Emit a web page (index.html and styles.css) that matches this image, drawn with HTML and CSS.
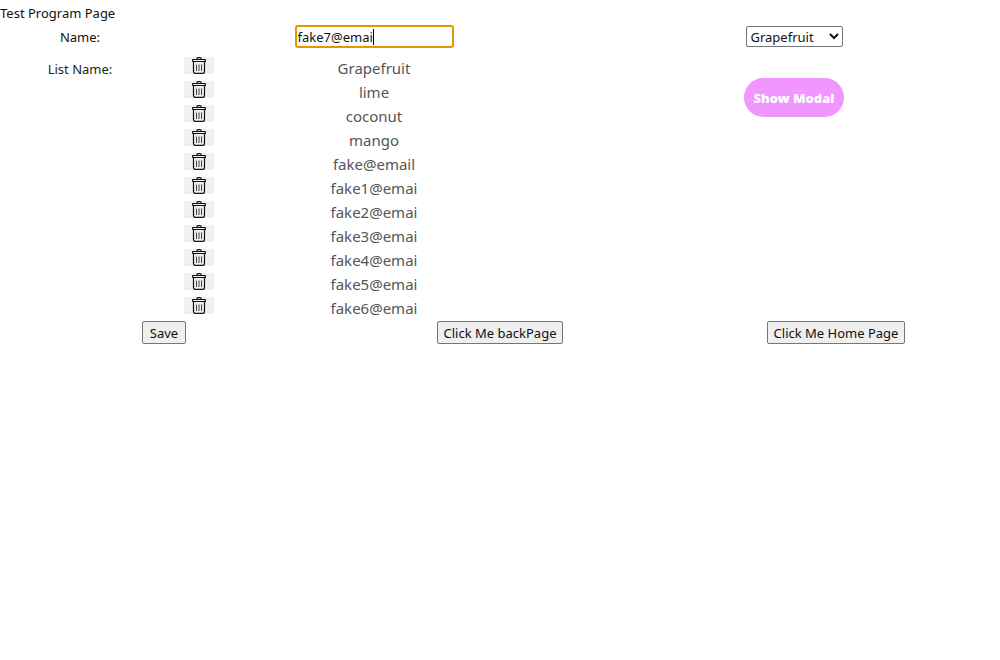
FILE: index.html
```html
<!DOCTYPE html>
<html lang="en">
<head>
<meta charset="utf-8">
<title>Test Program Page</title>
<link rel="stylesheet" href="styles.css">
</head>
<body>
<header class="title">Test Program Page</header>
<main>
<form class="columns entry">
<label for="name">Name:</label>
<div class="field"><input id="name" class="name-input" type="text" value="fake7@emai" autocomplete="off" spellcheck="false"><span class="caret"></span></div>
<div class="fruit-cell"><select class="fruit" aria-label="Fruit"><option>Grapefruit</option><option>lime</option><option>coconut</option><option>mango</option></select></div>
</form>
<section class="columns listing">
<div class="list-label" id="list-label">List Name:</div>
<ul class="names" id="names" aria-labelledby="list-label"></ul>
<div class="modal-cell"><button class="modal-button" type="button">Show Modal</button></div>
</section>
</main>
<nav class="actions">
<button class="button" type="button">Save</button>
<button class="button" type="button">Click Me backPage</button>
<button class="button" type="button">Click Me Home Page</button>
</nav>
<script src="script.js"></script>
</body>
</html>
```
FILE: script.js
```js
const names = ["Grapefruit", "lime", "coconut", "mango", "fake@email", "fake1@emai", "fake2@emai", "fake3@emai", "fake4@emai", "fake5@emai", "fake6@emai"];
const icon = '<svg class="trash" viewBox="0 0 14 17" aria-hidden="true"><path d="M5 2.5V1.5Q5 .6 6 .6H8Q9 .6 9 1.5V2.5"/><rect x=".5" y="2.5" width="13" height="2" rx="1"/><path d="M1.5 4.5V14.5Q1.5 16.4 3.5 16.4H10.5Q12.5 16.4 12.5 14.5V4.5"/><path class="bars" d="M4.5 7.5V14M7 7.5V14M9.5 7.5V14"/></svg>';
document.getElementById("names").innerHTML = names.map(name =>
  `<li class="item"><button class="delete" type="button" aria-label="Delete ${name}">${icon}</button><span>${name}</span></li>`
).join("");
```
FILE: styles.css
```css
body {
  margin: 0;
  background: #fff;
  color: #111;
  font: 13px/24px "Noto Sans", "Open Sans", sans-serif;
}
button, input, select {
  box-sizing: border-box;
  margin: 0;
  font-family: inherit;
  font-size: 13px;
  color: #111;
}
.title {
  padding-top: 1px;
}
.columns {
  display: grid;
  grid-template-columns: 40fr 107fr 103fr;
  text-align: center;
}
.field {
  position: relative;
  display: flex;
  align-items: flex-start;
  width: 159px;
  margin: 0 auto;
}
.name-input {
  width: 100%;
  height: 23px;
  padding: 0 1px;
  border: 2px solid #e59700;
  border-radius: 3px;
  outline: none;
}
.caret {
  position: absolute;
  left: 78px;
  top: 4px;
  width: 1px;
  height: 16px;
  background: #000;
}
.fruit-cell {
  padding-top: 1px;
}
.fruit {
  display: block;
  width: 97px;
  height: 21px;
  margin: 0 auto;
  padding: 0;
  border: 1px solid #767676;
  border-radius: 2px;
  background-color: #fff;
}
.listing {
  padding-top: 7px;
}
.list-label {
  padding-top: 1px;
  color: #222;
}
.names {
  list-style: none;
  margin: 0;
  padding: 0;
}
.item {
  display: grid;
  grid-template-columns: 78px 1fr 78px;
  font-size: 15px;
  color: #555;
}
.delete {
  width: 30px;
  height: 17px;
  margin: 1px auto 0;
  padding: 0;
  border: 0;
  background: #f0f0f0;
}
.trash {
  display: block;
  width: 14px;
  height: 17px;
  margin: 0 auto;
  fill: none;
  stroke: #111;
  stroke-width: 1.2;
}
.bars {
  stroke: #444;
  stroke-width: 1;
}
.modal-cell {
  padding-top: 22px;
}
.modal-button {
  height: 39px;
  padding: 0 10px;
  border: 0;
  border-radius: 20px;
  background: #f195ff;
  color: #fff;
  font-weight: 900;
}
.actions {
  display: grid;
  grid-template-columns: repeat(3, 1fr);
  gap: 8px;
  justify-items: center;
  padding-top: 1px;
}
.button {
  min-width: 44px;
  height: 23px;
  padding: 0 6px;
  border: 1px solid #767676;
  border-radius: 2px;
  background: #efefef;
}
```
